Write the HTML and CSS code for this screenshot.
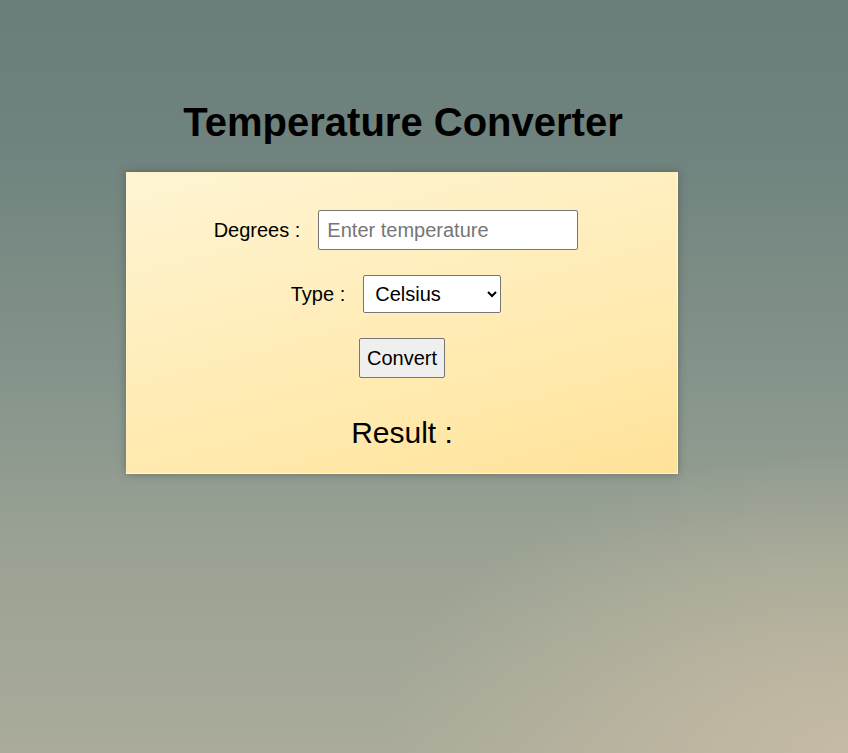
FILE: index.html
```html
<!DOCTYPE html>
<html>
<head>
<meta charset="utf-8">
<title>Temperature Converter</title>
<link rel="stylesheet" href="styles.css">
</head>
<body>
<main class="wrap">
  <h1 class="title">Temperature Converter</h1>
  <section class="card">
    <div class="row">
      <label class="label" for="deg">Degrees :</label>
      <input class="field" id="deg" type="text" placeholder="Enter temperature">
    </div>
    <div class="row">
      <label class="label" for="type">Type :</label>
      <select class="select" id="type">
        <option>Celsius</option>
        <option>Fahrenheit</option>
        <option>Kelvin</option>
      </select>
    </div>
    <div class="row row-btn">
      <button class="btn" type="button">Convert</button>
    </div>
    <div class="result">Result :</div>
  </section>
</main>
</body>
</html>
```
FILE: styles.css
```css
html, body {
  margin: 0;
  height: 100%;
}
body {
  font-family: "Liberation Sans", Arial, sans-serif;
  color: #000;
  background:
    radial-gradient(ellipse 55% 40% at 100% 100%, rgba(203,190,166,0.85) 0%, rgba(203,190,166,0) 100%),
    linear-gradient(180deg, #697e7a 0%, #70837e 20%, #85948b 50%, #9ca394 75%, #aaab9a 100%);
  min-height: 753px;
}
.wrap {
  width: 552px;
  margin-left: 126px;
  padding-top: 99px;
  display: flex;
  flex-direction: column;
  align-items: center;
}
.title {
  margin: 0;
  font-size: 40px;
  font-weight: bold;
  line-height: 46px;
  text-align: center;
  padding-left: 2px;
}
.card {
  box-sizing: border-box;
  width: 552px;
  height: 302px;
  margin-top: 27px;
  padding-top: 37px;
  display: flex;
  flex-direction: column;
  align-items: center;
  gap: 25px;
  background: linear-gradient(165deg, #fff5d4 0%, #ffefc0 35%, #ffe9ac 70%, #ffe299 100%);
  box-shadow: 0 0 8px rgba(60, 60, 50, 0.45);
  border: 1px solid rgba(255,255,255,0.35);
}
.row {
  display: flex;
  align-items: center;
  justify-content: center;
  gap: 18px;
  padding-right: 12px;
}
.row-btn {
  padding-right: 0;
}
.label {
  font-size: 20px;
}
.field {
  box-sizing: border-box;
  width: 260px;
  height: 40px;
  font-family: "Liberation Sans", Arial, sans-serif;
  font-size: 20px;
  padding: 0 8px;
  border: 1px solid #767676;
  border-radius: 2px;
  background: #fff;
}
.field::placeholder {
  color: #767676;
}
.select {
  box-sizing: border-box;
  width: 138px;
  height: 38px;
  font-family: "Liberation Sans", Arial, sans-serif;
  font-size: 20px;
  padding: 0 7px;
  border: 1px solid #767676;
  border-radius: 2px;
  background: #fff;
  color: #000;
}
.btn {
  box-sizing: border-box;
  width: 86px;
  height: 40px;
  font-family: "Liberation Sans", Arial, sans-serif;
  font-size: 20px;
  color: #000;
  padding: 0 6px;
  background: #efefef;
  border: 1px solid #767676;
  border-radius: 2px;
}
.result {
  margin-top: 13px;
  font-size: 30px;
  line-height: 34px;
}
```
